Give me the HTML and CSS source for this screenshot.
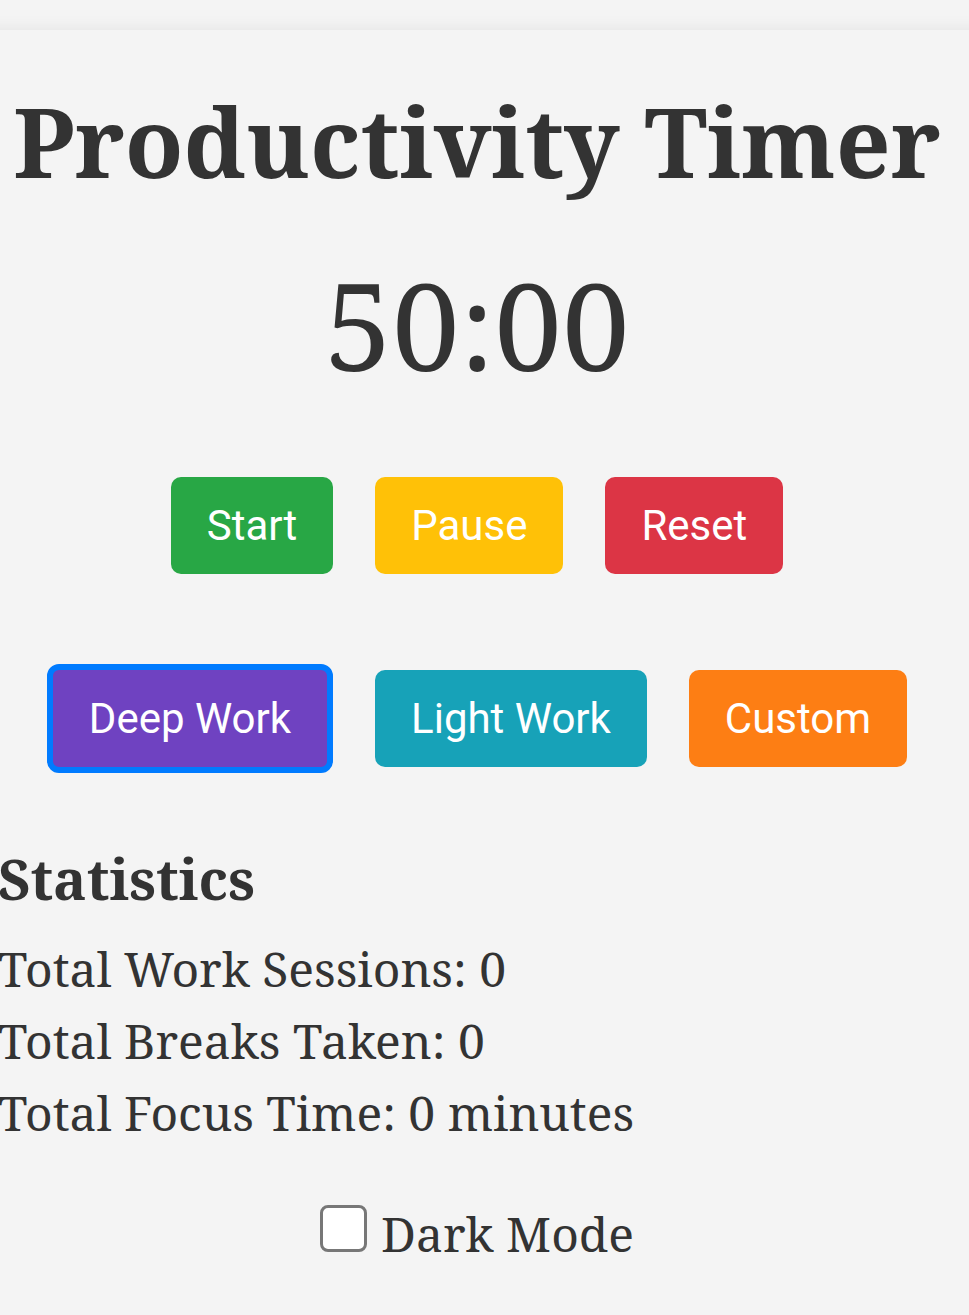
FILE: index.html
```html
<!DOCTYPE html>
<html lang="en">
<head>
<meta charset="utf-8">
<title>Productivity Timer</title>
<link rel="stylesheet" href="styles.css">
</head>
<body>
<div class="container">
  <h1 class="title">Productivity Timer</h1>
  <div class="timer">50:00</div>
  <div class="btn-row controls">
    <button class="btn btn-start">Start</button>
    <button class="btn btn-pause">Pause</button>
    <button class="btn btn-reset">Reset</button>
  </div>
  <div class="btn-row modes">
    <button class="btn btn-deep active">Deep Work</button>
    <button class="btn btn-light">Light Work</button>
    <button class="btn btn-custom">Custom</button>
  </div>
  <section class="stats">
    <h2 class="stats-title">Statistics</h2>
    <p class="stat">Total Work Sessions: 0</p>
    <p class="stat">Total Breaks Taken: 0</p>
    <p class="stat">Total Focus Time: 0 minutes</p>
  </section>
  <div class="dark-toggle">
    <label><input type="checkbox" class="dark-check"><span class="dark-label">Dark Mode</span></label>
  </div>
</div>
</body>
</html>
```
FILE: styles.css
```css
html, body {
  margin: 0;
  padding: 0;
  overflow-x: hidden;
  background: #f4f4f4;
}
body {
  font-family: "Noto Serif", "DejaVu Serif", serif;
  color: #333;
  font-size: 48px;
}
.container {
  margin: 30px -40px 0 -40px;
  padding: 0 53px 60px 38px;
  background: #f4f4f4;
  box-shadow: 0 0 16px rgba(0, 0, 0, 0.08);
}
.title {
  margin: 0;
  padding-top: 45px;
  text-align: center;
  font-size: 96px;
  font-weight: bold;
}
.timer {
  margin-top: 36px;
  text-align: center;
  font-size: 121px;
}
.btn-row {
  display: flex;
  justify-content: center;
  align-items: center;
  gap: 42px;
}
.controls {
  margin-top: 71px;
}
.modes {
  margin-top: 90px;
}
.btn {
  font-family: Roboto, "Liberation Sans", sans-serif;
  font-size: 42px;
  color: #fff;
  border: none;
  border-radius: 10px;
  padding: 24px 36px;
  line-height: 49px;
  cursor: pointer;
}
.btn-start { background: #28a745; }
.btn-pause { background: #ffc107; }
.btn-reset { background: #dc3545; }
.btn-deep { background: #6f42c1; }
.btn-light { background: #17a2b8; }
.btn-custom { background: #fd7e14; }
.btn.active {
  border: 6px solid #007bff;
  border-radius: 12px;
}
.stats {
  margin-top: 67px;
}
.stats-title {
  margin: 0 0 17px;
  font-size: 56px;
  font-weight: bold;
}
.stat {
  margin: 0;
  line-height: 72px;
}
.dark-toggle {
  margin-top: 52px;
  text-align: center;
}
.dark-check {
  appearance: none;
  -webkit-appearance: none;
  margin: 0 14px 0 0;
  width: 47px;
  height: 47px;
  border: 3px solid #777;
  border-radius: 8px;
  background: #fff;
  box-sizing: border-box;
  vertical-align: baseline;
}
```
